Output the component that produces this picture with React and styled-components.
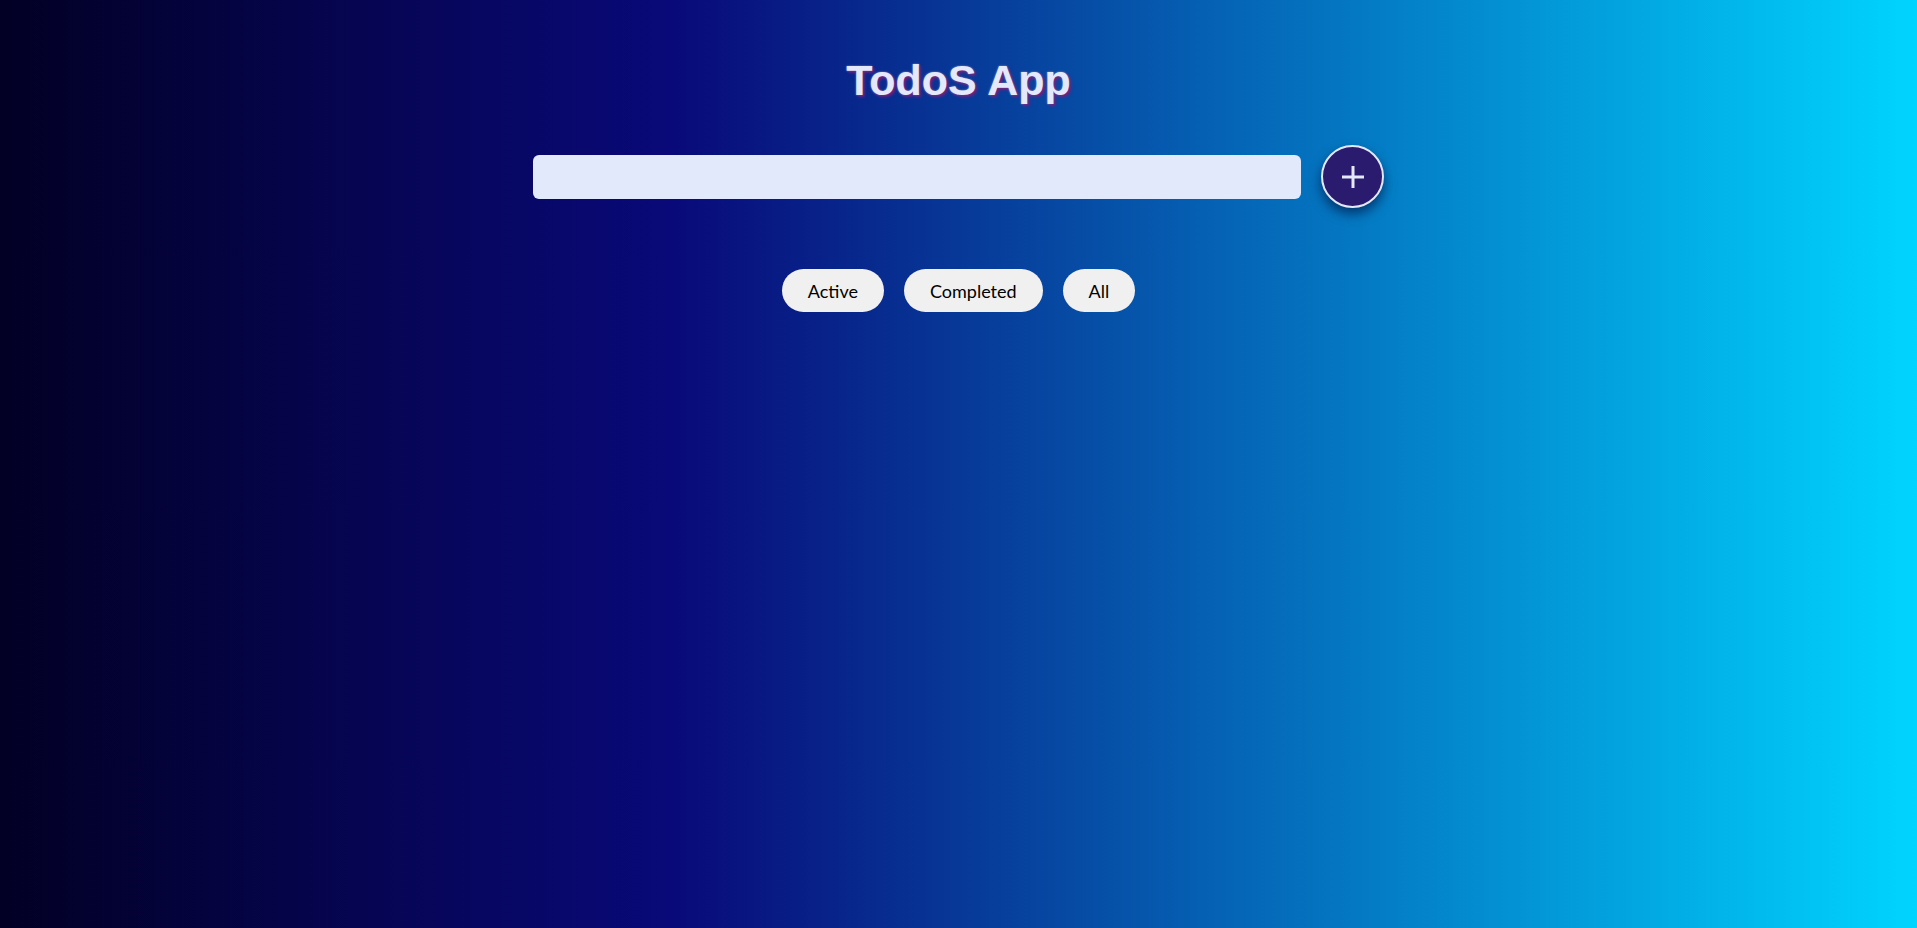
import React, { useState } from "react";
import styled, { createGlobalStyle } from "styled-components";

const Global = createGlobalStyle`
  html, body { margin: 0; padding: 0; height: 100%; }
  body {
    font-family: "Liberation Sans", Arial, sans-serif;
    background: linear-gradient(90deg, rgb(2,0,36) 0%, rgb(9,9,121) 35%, rgb(0,212,255) 100%);
    min-height: 100vh;
  }
  #root { min-height: 100vh; }
`;

const Page = styled.main`
  min-height: 100vh;
  display: flex;
  flex-direction: column;
  align-items: center;
  padding-top: 55px;
  box-sizing: border-box;
`;

const Title = styled.h1`
  margin: 0;
  font-family: "Liberation Sans", Arial, sans-serif;
  font-weight: 700;
  font-size: 43px;
  line-height: 50px;
  color: #e3e9fb;
  text-shadow: 2px 2px 3px rgba(120, 30, 120, 0.95), 0 0 2px rgba(227, 233, 251, 0.6);
`;

const Form = styled.form`
  display: flex;
  align-items: center;
  gap: 20px;
  margin-top: 40px;
`;

const Input = styled.input`
  width: 768px;
  height: 44px;
  box-sizing: border-box;
  border: none;
  border-radius: 6px;
  background: #e1e9fb;
  padding: 0 14px;
  font-size: 18px;
  outline: none;
`;

const AddButton = styled.button`
  width: 63px;
  height: 63px;
  box-sizing: border-box;
  border-radius: 50%;
  border: 2px solid #e3e9fb;
  background: #2a1b6e;
  display: flex;
  align-items: center;
  justify-content: center;
  padding: 0;
  cursor: pointer;
  box-shadow: 0 6px 12px rgba(0, 0, 40, 0.55);
`;

const Filters = styled.div`
  display: flex;
  gap: 20px;
  margin-top: 61px;
`;

const FilterButton = styled.button`
  height: 43px;
  padding: 0 26px;
  border: none;
  border-radius: 22px;
  background: #f0f0f0;
  color: #000;
  font-family: Lato, "Noto Sans", sans-serif;
  font-size: 18px;
  cursor: pointer;
`;

export default function App() {
  const [text, setText] = useState("");
  return (
    <>
      <Global />
      <Page>
        <Title>TodoS App</Title>
        <Form onSubmit={(e) => e.preventDefault()}>
          <Input value={text} onChange={(e) => setText(e.target.value)} />
          <AddButton type="submit" aria-label="Add">
            <svg width="24" height="24" viewBox="0 0 24 24">
              <path d="M12 1v22M1 12h22" stroke="#e3e9fb" strokeWidth="3" />
            </svg>
          </AddButton>
        </Form>
        <Filters>
          <FilterButton>Active</FilterButton>
          <FilterButton>Completed</FilterButton>
          <FilterButton>All</FilterButton>
        </Filters>
      </Page>
    </>
  );
}
